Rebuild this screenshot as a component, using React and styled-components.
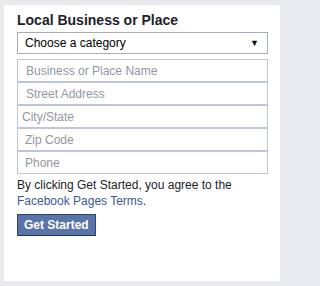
import React from "react";
import styled, { createGlobalStyle } from "styled-components";

const GlobalStyle = createGlobalStyle`
    html, body {
        margin: 0;
        padding: 0;
        background: #e9eaed;
    }
    body {
        font-family: "Liberation Sans", Arial, Helvetica, sans-serif;
    }
`;

const fields = [
    { name: "name", placeholder: "Business or Place Name", inset: 8 },
    { name: "street", placeholder: "Street Address", inset: 8 },
    { name: "city", placeholder: "City/State", inset: 4 },
    { name: "zip", placeholder: "Zip Code", inset: 7 },
    { name: "phone", placeholder: "Phone", inset: 7 },
];

const App = () => {
    return (
        <>
            <GlobalStyle />
            <Card>
                <Title>Local Business or Place</Title>
                <SelectBox>
                    <span>Choose a category</span>
                    <Arrow>▼</Arrow>
                </SelectBox>
                <Fields>
                    {fields.map((f) => (
                        <Input key={f.name} name={f.name} placeholder={f.placeholder} $inset={f.inset} />
                    ))}
                </Fields>
                <Terms>
                    By clicking Get Started, you agree to the <Link href="#">Facebook Pages Terms</Link>.
                </Terms>
                <Submit>Get Started</Submit>
            </Card>
        </>
    );
};

const Card = styled.div`
    box-sizing: border-box;
    width: 276px;
    height: 276px;
    margin: 5px 0 0 4px;
    padding: 6px 13px 0 13px;
    background: #ffffff;
    display: flex;
    flex-direction: column;
    align-items: flex-start;
`;

const Title = styled.div`
    font-size: 14px;
    font-weight: bold;
    line-height: 18px;
    color: #1d2129;
    margin-bottom: 3px;
`;

const SelectBox = styled.div`
    box-sizing: border-box;
    width: 251px;
    height: 22px;
    border: 1px solid #a9adb3;
    display: flex;
    align-items: center;
    justify-content: space-between;
    padding: 0 8px 0 7px;
    font-size: 12px;
    color: #000;
`;

const Arrow = styled.span`
    font-size: 9px;
    color: #111;
`;

const Fields = styled.div`
    display: flex;
    flex-direction: column;
    margin-top: 5px;
    width: 251px;
`;

const Input = styled.input`
    box-sizing: border-box;
    width: 100%;
    height: 23px;
    margin: 0;
    border: 1px solid #bdc7d8;
    padding: 0 0 0 ${(p) => p.$inset}px;
    font-family: inherit;
    font-size: 12px;
    color: #1d2129;
    outline: none;
    &::placeholder {
        color: #9197a3;
    }
`;

const Terms = styled.p`
    margin: 3px 0 5px 0;
    font-size: 12px;
    line-height: 16px;
    color: #1d2129;
`;

const Link = styled.a`
    color: #3b5998;
    text-decoration: none;
`;

const Submit = styled.button`
    box-sizing: border-box;
    height: 22px;
    padding: 0 6px;
    background: #5b74a8;
    border: 1px solid #29447e;
    border-bottom-color: #1a356e;
    color: #ffffff;
    font-family: inherit;
    font-size: 12px;
    font-weight: bold;
    cursor: pointer;
`;

export default App;
